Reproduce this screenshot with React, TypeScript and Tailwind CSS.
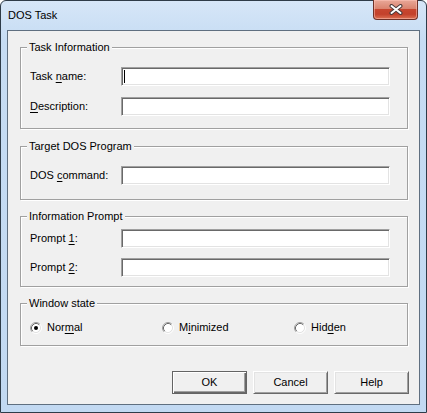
import type { ReactNode } from "react";

// Classic Win32 dialog: "DOS Task", Windows 7 basic frame.
const field =
  "relative h-[19px] w-[269px] border border-t-[#a0a0a0] border-l-[#a0a0a0] border-b-white border-r-white bg-white shadow-[inset_1px_1px_0_#696969,inset_-1px_-1px_0_#e3e3e3]";

function U({ children }: { children: ReactNode }) {
  return <span className="underline underline-offset-[2px]">{children}</span>;
}

function Group({ title, className, children }: { title: string; className: string; children: ReactNode }) {
  return (
    <div
      className={`relative ml-[12px] w-[388px] border border-[#a0a0a0] shadow-[inset_1px_1px_0_#fff,1px_1px_0_#fff] ${className}`}
    >
      <span className="absolute -top-[7px] left-[6px] bg-[#f0f0f0] px-[2px] leading-[13px]">{title}</span>
      {children}
    </div>
  );
}

function Row({ label, caret, className = "" }: { label: ReactNode; caret?: boolean; className?: string }) {
  return (
    <div className={`flex items-center ${className}`}>
      <span className="w-[91px] leading-[13px]">{label}</span>
      <div className={field}>
        {caret && <span className="absolute left-[2px] top-[2px] h-[13px] w-px bg-black" />}
      </div>
    </div>
  );
}

function Radio({ checked, label }: { checked?: boolean; label: ReactNode }) {
  return (
    <div className="flex w-[132px] shrink-0 items-center gap-[5px]">
      <svg width="12" height="12" viewBox="0 0 12 12" className="shrink-0">
        <circle cx="6" cy="6" r="4.5" fill="#fff" />
        <path d="M2.11 9.89A5.5 5.5 0 0 1 9.89 2.11" fill="none" stroke="#a0a0a0" />
        <path d="M9.89 2.11A5.5 5.5 0 0 1 2.11 9.89" fill="none" stroke="#fff" />
        <path d="M2.82 9.18A4.5 4.5 0 0 1 9.18 2.82" fill="none" stroke="#696969" />
        <path d="M9.18 2.82A4.5 4.5 0 0 1 2.82 9.18" fill="none" stroke="#e3e3e3" />
        {checked && <circle cx="6" cy="6" r="2" fill="#000" />}
      </svg>
      <span className="leading-[13px]">{label}</span>
    </div>
  );
}

function Button({ label, primary }: { label: string; primary?: boolean }) {
  const face = primary
    ? "border border-[#646464] shadow-[inset_1px_1px_0_#fff,inset_-1px_-1px_0_#696969,inset_-2px_-2px_0_#a0a0a0]"
    : "border border-t-white border-l-white border-b-[#696969] border-r-[#696969] shadow-[inset_1px_1px_0_#e3e3e3,inset_-1px_-1px_0_#a0a0a0]";
  return (
    <button className={`flex h-[23px] w-[75px] items-center justify-center bg-[#f0f0f0] leading-[13px] ${face}`}>
      {label}
    </button>
  );
}

export default function App() {
  return (
    <div className="h-[413px] w-[427px] bg-white font-['Liberation_Sans',Arial,sans-serif] text-[11px] text-black">
      <div className="flex h-full flex-col rounded-t-[6px] border border-[#2e3b48] bg-[linear-gradient(to_bottom,#d6e6f8,#c6dcf3_40px,#c2d9f2)]">
        {/* title bar */}
        <div className="flex h-[29px] shrink-0 items-start">
          <span className="pl-[7px] pt-[8px] leading-[13px]">DOS Task</span>
          <div className="-mt-px ml-auto mr-[8px] flex h-[20px] w-[45px] items-center justify-center rounded-b-[4px] border border-t-0 border-[#6e3128] bg-[linear-gradient(to_bottom,#e9a898,#da8470_45%,#c7462f_50%,#c3412b_75%,#dc7153)] shadow-[inset_0_0_0_1px_rgba(255,200,190,0.5)]">
            <svg width="14" height="11" viewBox="0 0 14 11">
              <path d="M2.5 2L11.5 9M11.5 2L2.5 9" stroke="#4a3a3a" strokeWidth="4" strokeLinecap="round" />
              <path d="M2.5 2L11.5 9M11.5 2L2.5 9" stroke="#fff" strokeWidth="2" strokeLinecap="round" />
            </svg>
          </div>
        </div>

        {/* client area */}
        <div className="mx-[6px] mb-[7px] flex flex-1 flex-col border border-[#5f6f80] bg-[#f0f0f0]">
          <Group title="Task Information" className="mt-[16px] pb-[12px] pl-[9px] pt-[19px]">
            <Row label={<>Task <U>n</U>ame:</>} caret />
            <Row label={<><U>D</U>escription:</>} className="mt-[11px]" />
          </Group>

          <Group title="Target DOS Program" className="mt-[17px] pb-[14px] pl-[9px] pt-[19px]">
            <Row label={<>DOS <U>c</U>ommand:</>} />
          </Group>

          <Group title="Information Prompt" className="mt-[16px] pb-[9px] pl-[9px] pt-[12px]">
            <Row label={<>Prompt <U>1</U>:</>} />
            <Row label={<>Prompt <U>2</U>:</>} className="mt-[10px]" />
          </Group>

          <Group title="Window state" className="mt-[16px] flex overflow-visible pb-[11px] pl-[9px] pt-[17px]">
            <Radio checked label={<>Nor<U>m</U>al</>} />
            <Radio label={<>M<U>i</U>nimized</>} />
            <Radio label={<>Hid<U>d</U>en</>} />
          </Group>

          <div className="mt-[25px] flex justify-end gap-[6px] pr-[10px]">
            <Button label="OK" primary />
            <Button label="Cancel" />
            <Button label="Help" />
          </div>
        </div>
      </div>
    </div>
  );
}
